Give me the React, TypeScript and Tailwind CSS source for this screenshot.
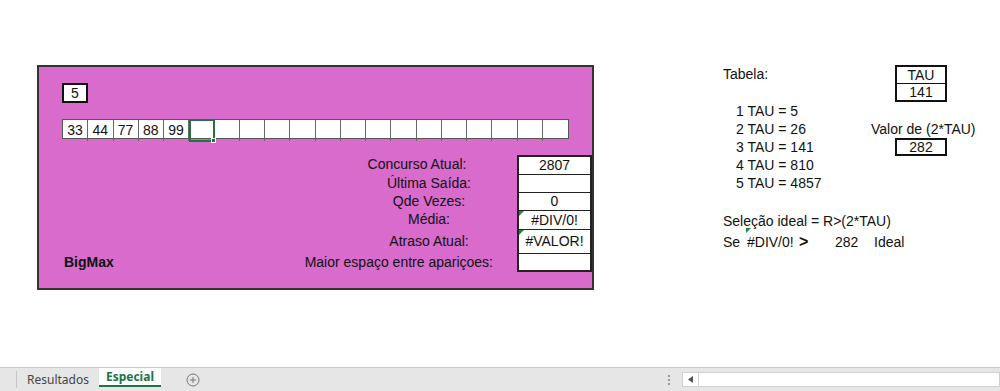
import React from 'react';

const NUMS = ['33', '44', '77', '88', '99'];

// label rows of the pink box: text, value, row height, label alignment
const ROWS = [
  { label: 'Concurso Atual:', value: '2807', h: 'h-[19px]', cls: 'justify-center pl-[302px] pr-[24px]' },
  { label: 'Última Saída:', value: '', h: 'h-[18px]', cls: 'justify-center pl-[302px]' },
  { label: 'Qde Vezes:', value: '0', h: 'h-[18px]', cls: 'justify-center pl-[302px]' },
  { label: 'Média:', value: '#DIV/0!', h: 'h-[19px]', cls: 'justify-center pl-[302px]', flag: true },
  { label: 'Atraso Atual:', value: '#VALOR!', h: 'h-[24px]', cls: 'justify-center pl-[302px]', flag: true },
  { label: 'Maior espaço entre apariçoes:', value: '', h: 'h-[19px]', cls: 'justify-end pr-[24px]' },
];

const TAUS = ['1 TAU = 5', '2 TAU = 26', '3 TAU = 141', '4 TAU = 810', '5 TAU = 4857'];

function Flag() {
  return (
    <svg className="absolute left-0 top-0" width="5" height="5" viewBox="0 0 5 5">
      <polygon points="0,0 5,0 0,5" fill="#1e8a3c" />
    </svg>
  );
}

function PinkBox() {
  return (
    <div className="w-[557px] h-[225px] bg-[#d86bcc] border-2 border-[#333] flex flex-col shrink-0">
      <div className="ml-[23px] mt-[16px] w-[26px] h-[20px] bg-white border-2 border-[#111] flex items-center justify-center">
        5
      </div>

      <div className="ml-[23px] mt-[16px] w-[507px] h-[20px] grid grid-cols-20 bg-white border border-[#555]">
        {Array.from({ length: 20 }).map((_, i) => (
          <div
            key={i}
            className={
              i === 5
                ? 'relative border-2 border-[#217346] -my-px'
                : 'flex items-center justify-center border-r border-[#666] last:border-r-0'
            }
          >
            {NUMS[i] ?? ''}
            {i === 5 && <span className="absolute -right-[3px] -bottom-[3px] w-[5px] h-[5px] bg-[#217346] border border-white" />}
          </div>
        ))}
      </div>

      <div className="mt-[16px] grid grid-cols-[1fr_75px]">
        {ROWS.map((r, i) => (
          <React.Fragment key={i}>
            <div className={`${r.h} flex items-center whitespace-nowrap relative ${r.cls}`}>
              {i === 5 && <span className="absolute left-[25px] font-bold">BigMax</span>}
              {r.label}
            </div>
            <div
              className={`${r.h} relative bg-white border-x-2 border-[#222] flex items-center justify-center ${
                i === 0 ? 'border-t-2' : 'border-t'
              } ${i === 5 ? 'border-b-2' : ''}`}
            >
              {r.flag && <Flag />}
              {r.value}
            </div>
          </React.Fragment>
        ))}
      </div>
    </div>
  );
}

function RightPanel() {
  return (
    <div className="ml-[129px] w-[260px] flex flex-col">
      <div className="flex h-[19px] items-center">
        <span className="w-[172px]">Tabela:</span>
        <div className="w-[52px] h-[19px] border-2 border-b border-[#111] flex items-center justify-center">TAU</div>
      </div>
      <div className="flex h-[18px] items-center">
        <span className="w-[172px]" />
        <div className="w-[52px] h-[18px] border-2 border-t-0 border-[#111] flex items-center justify-center">141</div>
      </div>
      {TAUS.map((t, i) => (
        <div key={t} className="flex h-[18px] items-center whitespace-nowrap">
          <span className="pl-[13px] w-[148px]">{t}</span>
          {i === 1 && <span>Valor de (2*TAU)</span>}
          {i === 2 && (
            <>
              <span className="w-[24px]" />
              <div className="w-[52px] h-[18px] border-2 border-[#111] flex items-center justify-center">282</div>
            </>
          )}
        </div>
      ))}
      <div className="mt-[20px] h-[18px] flex items-center whitespace-nowrap">Seleção ideal = R&gt;(2*TAU)</div>
      <div className="mt-[3px] h-[18px] flex items-center whitespace-nowrap">
        <span className="w-[24px]">Se</span>
        <span className="relative w-[52px]">
          <svg className="absolute -left-px -top-[4px]" width="5" height="5" viewBox="0 0 5 5">
            <polygon points="0,0 5,0 0,5" fill="#1e8a3c" />
          </svg>
          #DIV/0!
        </span>
        <span className="w-[36px] font-bold text-[16px]">&gt;</span>
        <span className="w-[39px]">282</span>
        <span>Ideal</span>
      </div>
    </div>
  );
}

function TabBar() {
  return (
    <div className="h-[24px] bg-[#e6e6e6] border-t border-[#c8c8c8] flex items-stretch font-['Noto_Sans',sans-serif] text-[12px]">
      <div className="w-[17px] border-r border-[#c6c6c6] my-[3px]" />
      <div className="pl-[10px] pr-[10px] flex items-center text-[#444]">Resultados</div>
      <div className="w-[62px] bg-white flex items-center justify-center font-bold text-[#217346] border-b-2 border-[#217346] mb-[4px]">
        Especial
      </div>
      <div className="ml-[25px] flex items-center">
        <svg width="14" height="14" viewBox="0 0 14 14">
          <circle cx="7" cy="7" r="6" fill="none" stroke="#777" strokeWidth="1" />
          <path d="M7 4v6M4 7h6" stroke="#777" strokeWidth="1" />
        </svg>
      </div>
      <div className="ml-auto w-[360px] flex items-center">
        <div className="ml-[28px] flex flex-col gap-[2px]">
          <span className="w-[2px] h-[2px] bg-[#999]" />
          <span className="w-[2px] h-[2px] bg-[#999]" />
          <span className="w-[2px] h-[2px] bg-[#999]" />
        </div>
        <div className="ml-[12px] flex-1 h-[15px] bg-white border border-[#d0d0d0] flex">
          <div className="w-[16px] border-r border-[#d0d0d0] flex items-center justify-center">
            <svg width="5" height="7" viewBox="0 0 5 7">
              <polygon points="5,0 0,3.5 5,7" fill="#555" />
            </svg>
          </div>
        </div>
      </div>
    </div>
  );
}

export default function App() {
  return (
    <div className="w-[1000px] h-[391px] bg-white flex flex-col font-['Liberation_Sans',Arial,sans-serif] text-[14px] text-[#111] overflow-hidden">
      <div className="flex-1 pt-[65px] pl-[37px] flex items-start">
        <PinkBox />
        <RightPanel />
      </div>
      <TabBar />
    </div>
  );
}
